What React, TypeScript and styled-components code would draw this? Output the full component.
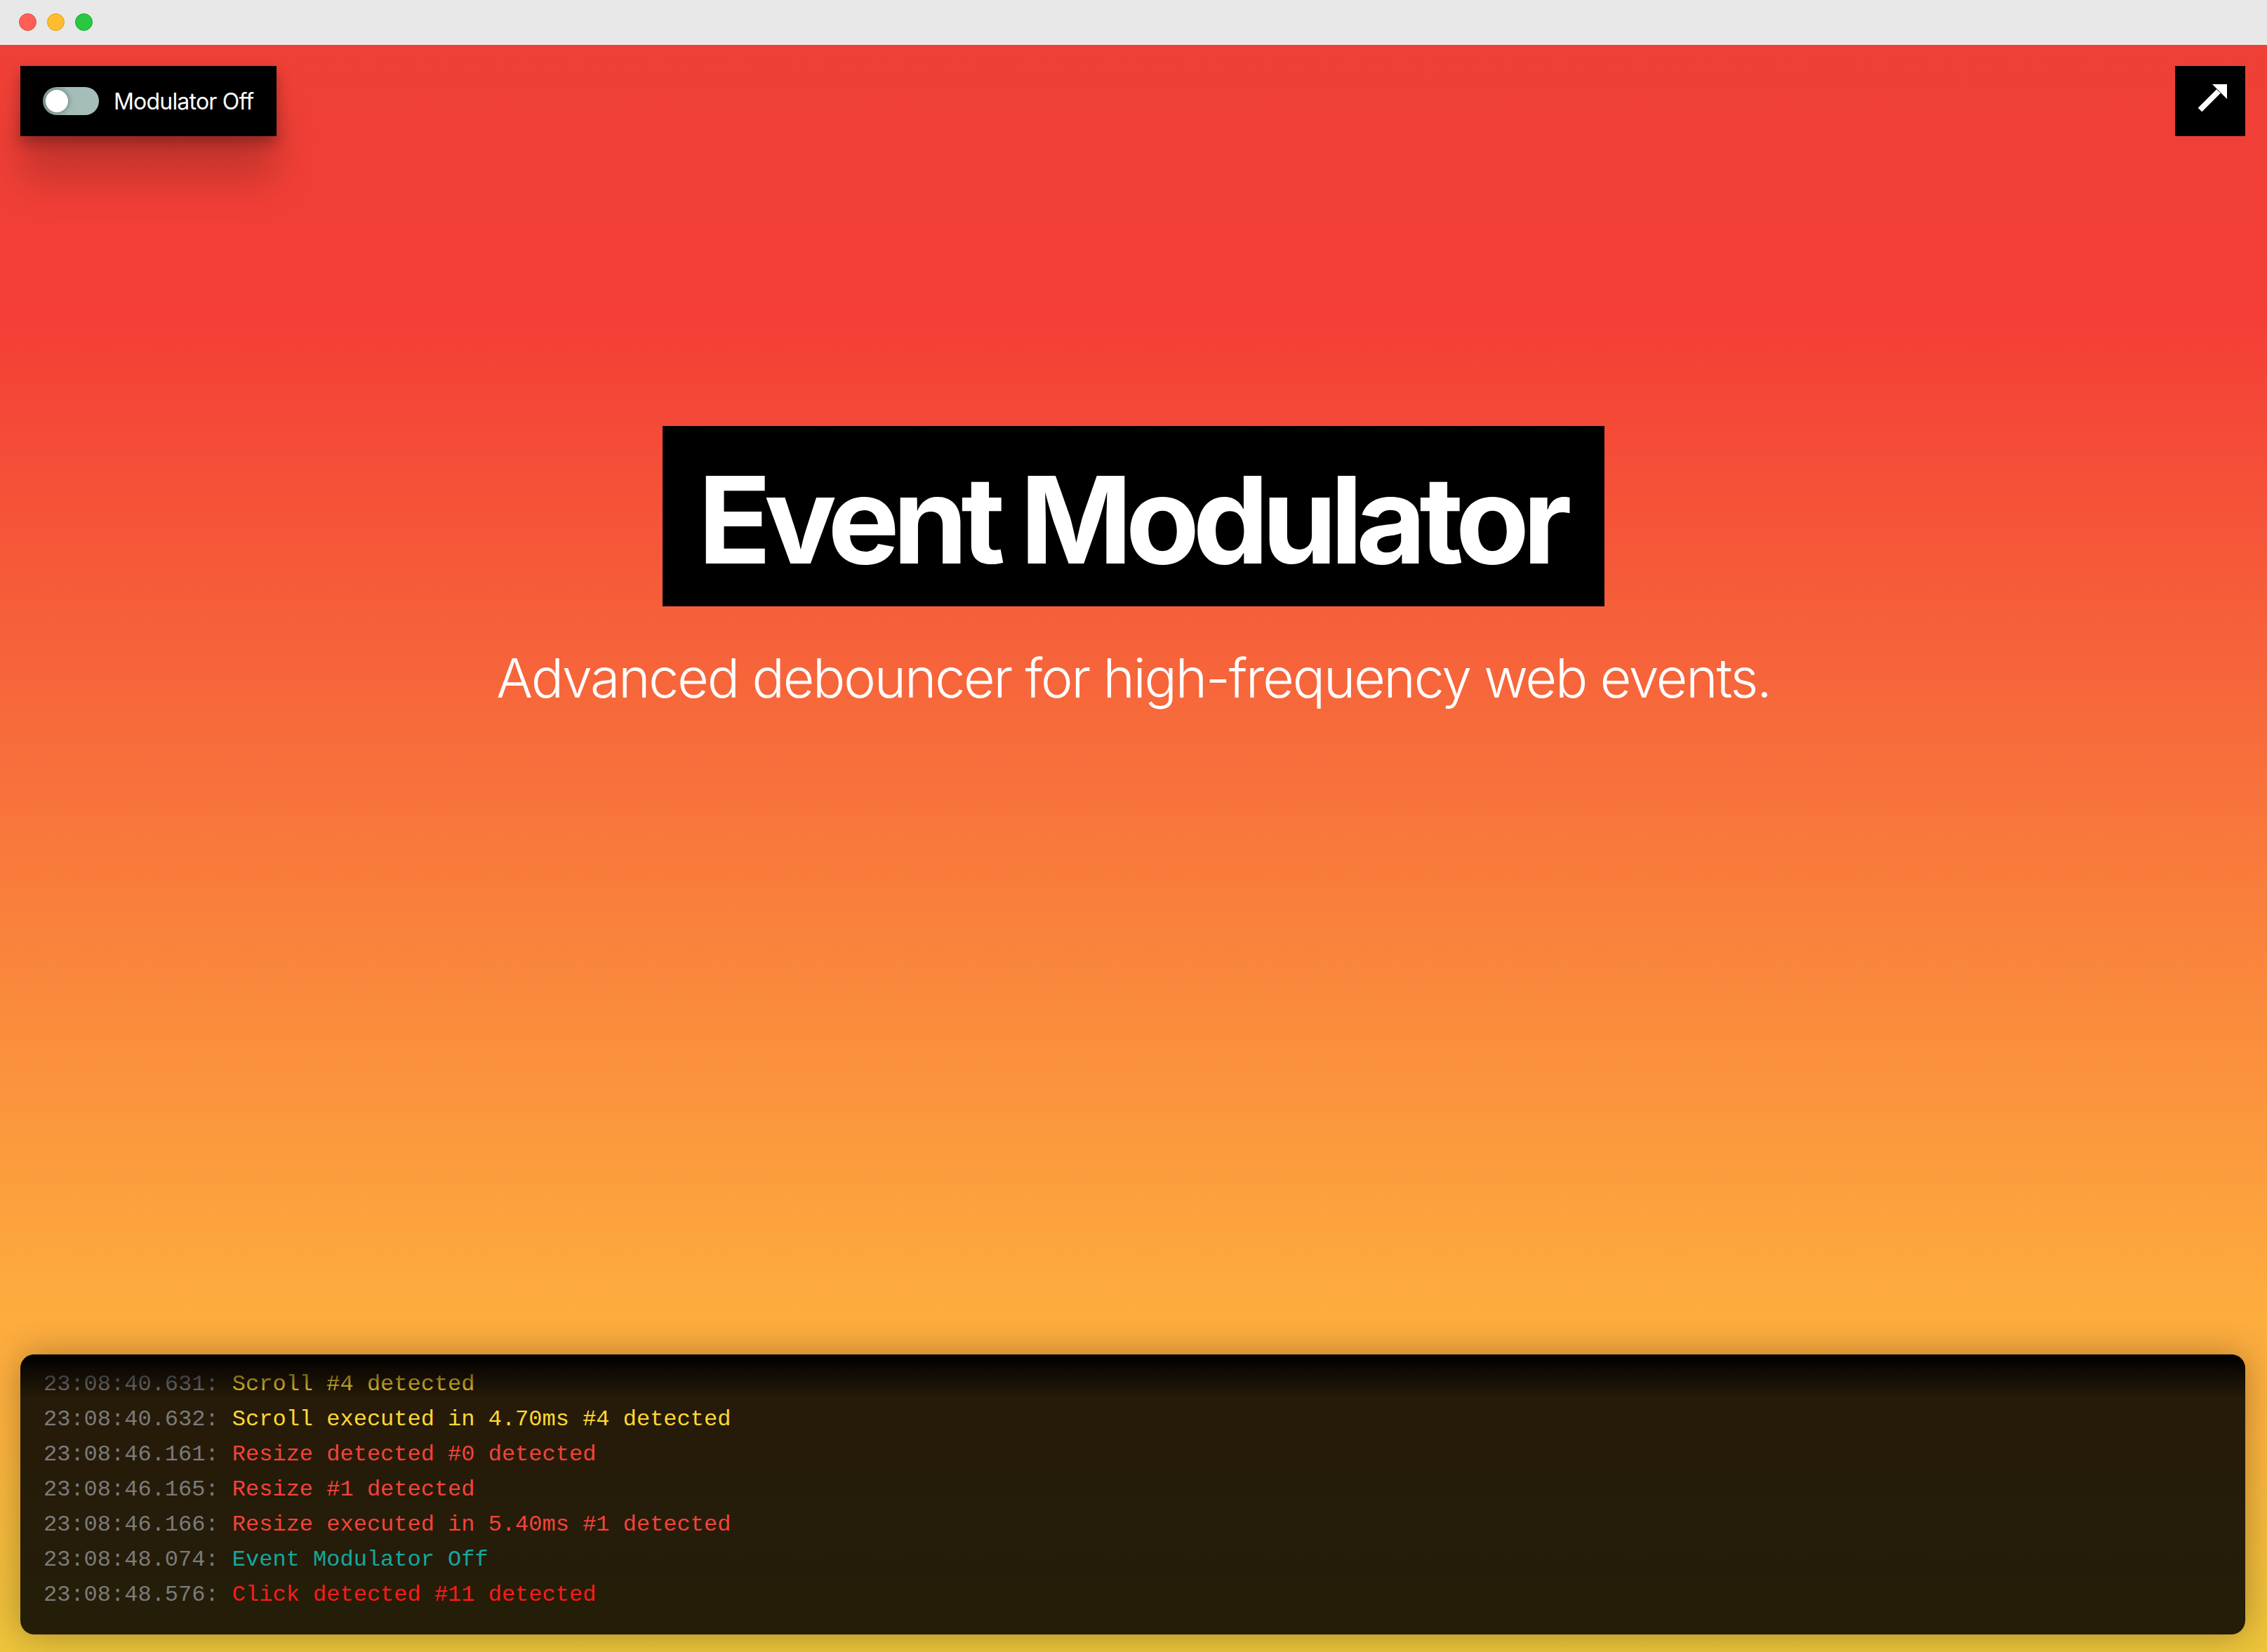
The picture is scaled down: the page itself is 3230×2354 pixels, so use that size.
import React from "react";
import styled, { createGlobalStyle } from "styled-components";

const Global = createGlobalStyle`
  html, body { margin: 0; padding: 0; }
  body { font-family: Inter, "Noto Sans", sans-serif; background: #e8e8e8; }
  * { box-sizing: border-box; }
`;

const Window = styled.div`
  width: 100%;
  height: 100vh;
  display: flex;
  flex-direction: column;
  overflow: hidden;
`;

const TitleBar = styled.div`
  height: 64px;
  flex: 0 0 64px;
  background: #e8e8e8;
  display: flex;
  align-items: center;
  gap: 15px;
  padding: 0 0 2px 27px;
`;

const Light = styled.span<{ $c: string; $b: string }>`
  width: 25px;
  height: 25px;
  border-radius: 50%;
  background: ${(p) => p.$c};
  border: 1px solid ${(p) => p.$b};
`;

const Stage = styled.main`
  flex: 1;
  display: flex;
  flex-direction: column;
  background: linear-gradient(
    180deg,
    #ee4036 0%,
    #f43e36 17%,
    #f76a3b 42%,
    #fa873c 58%,
    #fdab3e 78%,
    #fdb23e 86%,
    #ecc53a 100%
  );
  padding: 30px 31px 25px 29px;
`;

const TopRow = styled.div`
  display: flex;
  justify-content: space-between;
  align-items: flex-start;
`;

const ToggleButton = styled.button`
  height: 100px;
  display: flex;
  align-items: center;
  gap: 21px;
  padding: 0 33px 0 32px;
  background: #000;
  border: none;
  color: #fff;
  font-family: Inter, "Noto Sans", sans-serif;
  font-size: 32px;
  font-weight: 400;
  letter-spacing: -0.025em;
  box-shadow: 0 10px 20px rgba(0, 0, 0, 0.3), 0 65px 55px rgba(0, 0, 0, 0.17);
  cursor: pointer;
`;

const Track = styled.span`
  position: relative;
  width: 80px;
  height: 40px;
  border-radius: 20px;
  background: linear-gradient(90deg, #7e9894 0%, #a3bcb8 45%, #a6bfbb 100%);
  display: flex;
  align-items: center;
  padding-left: 4px;
`;

const Knob = styled.span`
  width: 32px;
  height: 32px;
  border-radius: 50%;
  background: #fff;
  box-shadow: 2px 0 6px rgba(0, 0, 0, 0.25);
`;

const ArrowButton = styled.button`
  width: 100px;
  height: 100px;
  background: #000;
  border: none;
  padding: 0;
  display: flex;
  align-items: center;
  justify-content: center;
  cursor: pointer;
`;

const Hero = styled.section`
  display: flex;
  flex-direction: column;
  align-items: center;
  margin-top: 413px;
  padding-left: 2px;
`;

const TitleBox = styled.h1`
  margin: 0;
  background: #000;
  color: #fff;
  font-family: Inter, "Noto Sans", sans-serif;
  font-weight: 700;
  font-size: 172px;
  line-height: 172px;
  letter-spacing: -0.057em;
  padding: 47px 56px 38px 50px;
  white-space: nowrap;
`;

const Subtitle = styled.p`
  margin: 56px 0 0;
  color: #fff;
  font-family: Inter, "Noto Sans", sans-serif;
  font-weight: 300;
  font-size: 77px;
  line-height: 1.2;
  letter-spacing: -0.028em;
  white-space: nowrap;
`;

const Spacer = styled.div`
  flex: 1;
`;

const LogPanel = styled.section`
  position: relative;
  height: 399px;
  border-radius: 20px;
  background: rgba(0, 0, 0, 0.85);
  box-shadow: 0 0 50px rgba(0, 0, 0, 0.3);
  overflow: hidden;
  padding: 0 34px 31px 33px;
  display: flex;
  flex-direction: column;
  justify-content: flex-end;
`;

const Fade = styled.div`
  position: absolute;
  left: 0;
  right: 0;
  top: 0;
  height: 62px;
  background: linear-gradient(180deg, #000 0%, rgba(0, 0, 0, 0.6) 40%, rgba(0, 0, 0, 0) 100%);
  pointer-events: none;
`;

const LogLine = styled.div`
  flex: 0 0 50px;
  height: 50px;
  line-height: 50px;
  font-family: "Liberation Mono", "DejaVu Sans Mono", monospace;
  font-size: 32px;
  white-space: pre;
`;

const Stamp = styled.span`
  color: #7b7b7b;
`;

const Msg = styled.span<{ $c: string }>`
  color: ${(p) => p.$c};
`;

const COLORS: Record<string, string> = {
  scroll: "#ffd932",
  resize: "#f4433a",
  info: "#12a89f",
  click: "#ff1a1a",
};

const logs: { t: string; m: string; k: string }[] = [
  { t: "23:08:40.631", m: "Scroll #4 detected", k: "scroll" },
  { t: "23:08:40.632", m: "Scroll executed in 4.70ms #4 detected", k: "scroll" },
  { t: "23:08:46.161", m: "Resize detected #0 detected", k: "resize" },
  { t: "23:08:46.165", m: "Resize #1 detected", k: "resize" },
  { t: "23:08:46.166", m: "Resize executed in 5.40ms #1 detected", k: "resize" },
  { t: "23:08:48.074", m: "Event Modulator Off", k: "info" },
  { t: "23:08:48.576", m: "Click detected #11 detected", k: "click" },
];

export default function App() {
  return (
    <>
      <Global />
      <Window>
        <TitleBar>
          <Light $c="#ff5f57" $b="#e2463f" />
          <Light $c="#febc2e" $b="#e1a116" />
          <Light $c="#28c840" $b="#14ae2c" />
        </TitleBar>
        <Stage>
          <TopRow>
            <ToggleButton>
              <Track>
                <Knob />
              </Track>
              Modulator Off
            </ToggleButton>
            <ArrowButton aria-label="open">
              <svg width="100" height="100" viewBox="0 0 100 100">
                <line x1="35.5" y1="62.5" x2="62" y2="36" stroke="#fff" strokeWidth="8" />
                <polygon points="53,26 74,26 74,47" fill="#fff" />
              </svg>
            </ArrowButton>
          </TopRow>
          <Hero>
            <TitleBox>Event Modulator</TitleBox>
            <Subtitle>Advanced debouncer for high-frequency web events.</Subtitle>
          </Hero>
          <Spacer />
          <LogPanel>
            {logs.map((l, i) => (
              <LogLine key={i}>
                <Stamp>{l.t}: </Stamp>
                <Msg $c={COLORS[l.k]}>{l.m}</Msg>
              </LogLine>
            ))}
            <Fade />
          </LogPanel>
        </Stage>
      </Window>
    </>
  );
}
